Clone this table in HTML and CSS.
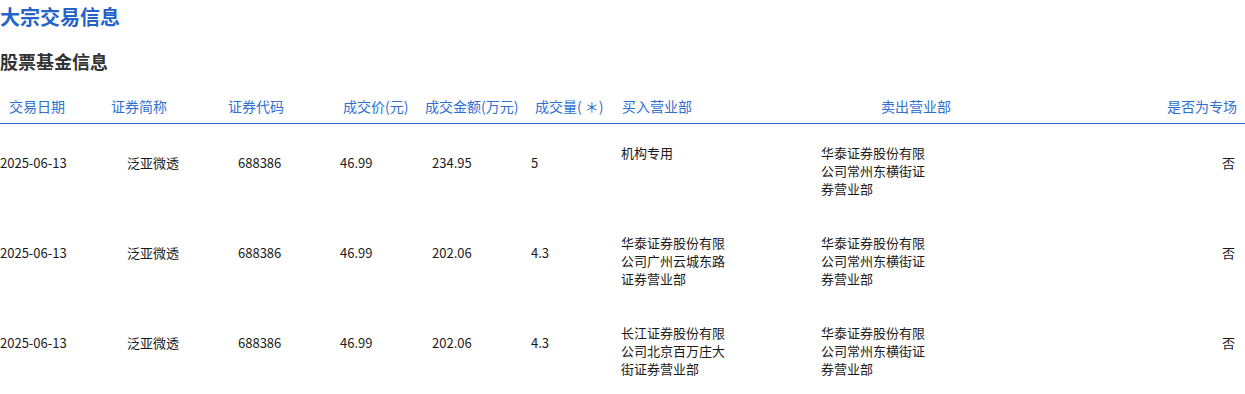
FILE: index.html
```html
<!DOCTYPE html>
<html lang="zh-CN">
<head>
<meta charset="utf-8">
<title>大宗交易信息</title>
<link rel="stylesheet" href="styles.css">
</head>
<body>
<h1 class="title">大宗交易信息</h1>
<h2 class="subtitle">股票基金信息</h2>
<div class="table">
  <div class="thead">
    <div>交易日期</div>
    <div>证券简称</div>
    <div>证券代码</div>
    <div>成交价(元)</div>
    <div>成交金额(万元)</div>
    <div>成交量( ＊)</div>
    <div>买入营业部</div>
    <div>卖出营业部</div>
    <div class="right">是否为专场</div>
  </div>
  <div class="row">
    <div class="c">2025-06-13</div>
    <div class="c">泛亚微透</div>
    <div class="c">688386</div>
    <div class="c">46.99</div>
    <div class="c">234.95</div>
    <div class="c">5</div>
    <div class="m">机构专用</div>
    <div class="m">华泰证券股份有限公司常州东横街证券营业部</div>
    <div class="c right">否</div>
  </div>
  <div class="row">
    <div class="c">2025-06-13</div>
    <div class="c">泛亚微透</div>
    <div class="c">688386</div>
    <div class="c">46.99</div>
    <div class="c">202.06</div>
    <div class="c">4.3</div>
    <div class="m">华泰证券股份有限公司广州云城东路证券营业部</div>
    <div class="m">华泰证券股份有限公司常州东横街证券营业部</div>
    <div class="c right">否</div>
  </div>
  <div class="row">
    <div class="c">2025-06-13</div>
    <div class="c">泛亚微透</div>
    <div class="c">688386</div>
    <div class="c">46.99</div>
    <div class="c">202.06</div>
    <div class="c">4.3</div>
    <div class="m">长江证券股份有限公司北京百万庄大街证券营业部</div>
    <div class="m">华泰证券股份有限公司常州东横街证券营业部</div>
    <div class="c right">否</div>
  </div>
</div>
</body>
</html>
```
FILE: styles.css
```css
html, body {
  margin: 0;
  padding: 0;
  background: #fff;
}
body {
  font-family: "Noto Sans CJK SC", "Noto Sans", sans-serif;
  color: #1a1a1a;
  width: 1245px;
}
.title {
  margin: 0;
  padding-top: 3px;
  font-size: 20px;
  line-height: 28px;
  font-weight: 700;
  color: #2463c8;
}
.subtitle {
  margin: 17px 0 0;
  font-size: 18px;
  line-height: 26px;
  font-weight: 700;
  color: #333;
}
.table {
  margin-top: 22px;
}
.thead {
  display: grid;
  grid-template-columns: 102px 117px 115px 82px 110px 87px 259px 1fr 120px;
  padding: 0 8px 7px 9px;
  border-bottom: 1px solid #2a66c4;
  font-size: 14px;
  line-height: 20px;
  color: #2f6fd0;
  white-space: nowrap;
}
.row {
  display: grid;
  grid-template-columns: 127px 111px 102px 92px 99px 90px 200px 1fr 60px;
  height: 90px;
  padding-top: 20px;
  box-sizing: border-box;
  font-size: 13px;
  line-height: 18px;
  align-items: start;
}
.row .c {
  margin-top: 10px;
  white-space: nowrap;
}
.row .m {
  max-width: 105px;
}
.right {
  text-align: right;
}
.row .right {
  padding-right: 10px;
}
```
